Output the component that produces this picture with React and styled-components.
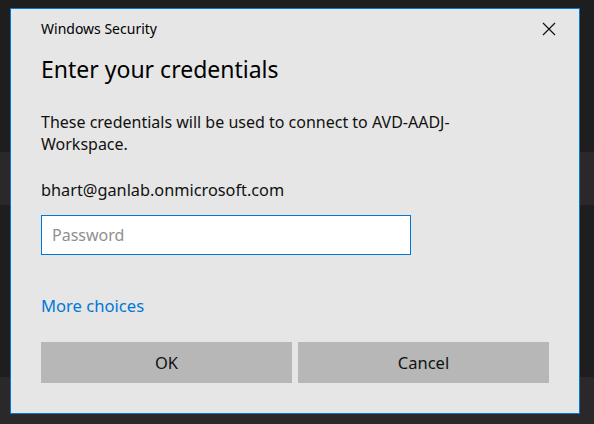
import styled, { createGlobalStyle } from 'styled-components';

const GlobalStyle = createGlobalStyle`
  html, body {
    margin: 0;
    padding: 0;
    width: 594px;
    height: 424px;
    overflow: hidden;
  }

  body {
    background: linear-gradient(
      to bottom,
      #1e1e1e 0px,
      #1e1e1e 152px,
      #2a282b 152px,
      #2a282b 205px,
      #1e1e1e 205px,
      #1e1e1e 377px,
      #2a282b 377px,
      #2a282b 424px
    );
    font-family: 'Noto Sans', 'Open Sans', sans-serif;
  }
`;

const Screen = styled.div`
  padding: 8px 0 0 10px;
`;

const Dialog = styled.div`
  box-sizing: border-box;
  width: 570px;
  height: 406px;
  background-color: #e6e6e6;
  border: 1px solid #0078d7;
  padding: 10px 30px 0 30px;
  display: flex;
  flex-direction: column;
  color: #000;
`;

const TitleBar = styled.div`
  display: flex;
  justify-content: space-between;
  align-items: center;
  height: 20px;
`;

const Caption = styled.div`
  font-size: 14px;
  line-height: 20px;
`;

const CloseButton = styled.button`
  border: none;
  background: transparent;
  padding: 0;
  margin-right: -7px;
  width: 14px;
  height: 14px;
  display: flex;
  align-items: center;
  justify-content: center;
  cursor: pointer;
`;

const Heading = styled.h1`
  margin: 14px 0 0 0;
  font-size: 23px;
  font-weight: 400;
  line-height: 32px;
  height: 32px;
`;

const Text = styled.p`
  margin: ${(props) => props.$top || 0}px 0 0 0;
  font-size: ${(props) => props.$size || 16}px;
  line-height: 22px;
  color: #111;
`;

const PasswordInput = styled.input`
  box-sizing: border-box;
  margin-top: 14px;
  width: 370px;
  height: 40px;
  border: 1px solid #0078d7;
  background-color: #fff;
  padding: 0 10px;
  font-family: inherit;
  font-size: 16px;
  outline: none;

  &::placeholder {
    color: #8f8f8f;
  }
`;

const Link = styled.a`
  margin-top: 40px;
  font-size: 16.6px;
  line-height: 22px;
  color: #0078d7;
  text-decoration: none;
  cursor: pointer;
`;

const ButtonRow = styled.div`
  display: grid;
  grid-template-columns: 251px 251px;
  gap: 6px;
  margin-top: 25px;
`;

const Button = styled.button`
  height: 41px;
  border: none;
  background-color: #b7b7b7;
  font-family: inherit;
  font-size: 16.5px;
  color: #111;
  cursor: pointer;
`;

export default function App() {
  return (
    <>
      <GlobalStyle />
      <Screen>
        <Dialog>
          <TitleBar>
            <Caption>Windows Security</Caption>
            <CloseButton aria-label="Close">
              <svg width="14" height="14" viewBox="0 0 14 14">
                <path d="M1 1 L13 13 M13 1 L1 13" stroke="#111" strokeWidth="1.2" fill="none" />
              </svg>
            </CloseButton>
          </TitleBar>
          <Heading>Enter your credentials</Heading>
          <Text $top={26}>
            These credentials will be used to connect to AVD-AADJ-
            <br />
            Workspace.
          </Text>
          <Text $top={24} $size={16.3}>bhart@ganlab.onmicrosoft.com</Text>
          <PasswordInput type="password" placeholder="Password" />
          <Link>More choices</Link>
          <ButtonRow>
            <Button>OK</Button>
            <Button>Cancel</Button>
          </ButtonRow>
        </Dialog>
      </Screen>
    </>
  );
}
